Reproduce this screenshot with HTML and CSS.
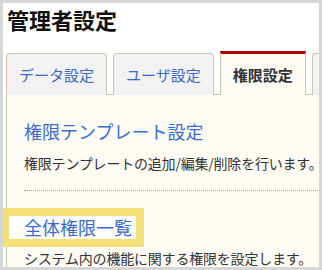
FILE: index.html
```html
<!DOCTYPE html>
<html lang="ja">
<head>
  <meta charset="UTF-8" />
  <title>管理者設定</title>
  <link rel="stylesheet" href="styles.css">
</head>
<body>

<div class="frame">
  <h1 class="page-title">管理者設定</h1>

  <!-- タブ -->
  <div class="tabs">
    <a class="tab">データ設定</a>
    <a class="tab">ユーザ設定</a>
    <a class="tab active">権限設定</a>
    <a class="tab more"></a>
  </div>

  <!-- 権限設定パネル -->
  <div class="panel">
    <div class="section">
      <a class="section-link">権限テンプレート設定</a>
      <p class="section-desc">権限テンプレートの追加/編集/削除を行います。</p>
    </div>
    <div class="section last">
      <a class="section-link marked">全体権限一覧</a>
      <p class="section-desc">システム内の機能に関する権限を設定します。</p>
    </div>
  </div>
</div>

</body>
</html>
```

FILE: styles.css
```css
* { box-sizing: border-box; }
body {
  margin: 0;
  font-family: "Noto Sans CJK JP", "Noto Sans", sans-serif;
  background: #fff;
}
.frame {
  width: 322px;
  height: 270px;
  border: 3px solid #d6d6d6;
  overflow: hidden;
  background: #fff;
}
.page-title {
  margin: 0 0 16px;
  padding-left: 4px;
  font-size: 22px;
  line-height: 32px;
  font-weight: bold;
  color: #111;
}
.tabs {
  display: flex;
  align-items: flex-end;
  gap: 6px;
  padding-left: 3px;
  margin-bottom: -1px;
  white-space: nowrap;
}
.tab {
  flex: none;
  height: 42px;
  padding: 0 12px;
  line-height: 41px;
  font-size: 15px;
  color: #3a6bcc;
  background: #f2f2f2;
  border: 1px solid #cdc5ad;
  border-bottom: none;
  border-radius: 4px 4px 0 0;
}
.tab.more {
  width: 60px;
}
.tab.active {
  position: relative;
  z-index: 1;
  height: 44px;
  border-top: 3px solid #b30000;
  border-radius: 0;
  background: #fffcf6;
  color: #333;
  font-weight: bold;
}
.panel {
  width: 400px;
  margin-left: 3px;
  padding: 24px 0 0 17px;
  height: 200px;
  background: #fffcf6;
  border-top: 1px solid #cdc5ad;
  border-left: 1px solid #cdc5ad;
}
.section {
  padding-bottom: 17px;
  border-bottom: 1px dotted #999;
}
.section.last {
  border-bottom: none;
  padding-top: 25px;
}
.section-link {
  display: inline-block;
  font-size: 18px;
  line-height: 24px;
  color: #3a6bcc;
}
.section-link.marked {
  line-height: 23px;
  margin-left: -15px;
  padding: 0 4px 0 15px;
  background: #fff;
  outline: 8px solid #f3e178;
}
.section-desc {
  margin: 9px 0 0;
  font-size: 14px;
  line-height: 20px;
  letter-spacing: -0.2px;
  color: #333;
  white-space: nowrap;
}
.section.last .section-desc {
  margin-top: 8px;
}
```
